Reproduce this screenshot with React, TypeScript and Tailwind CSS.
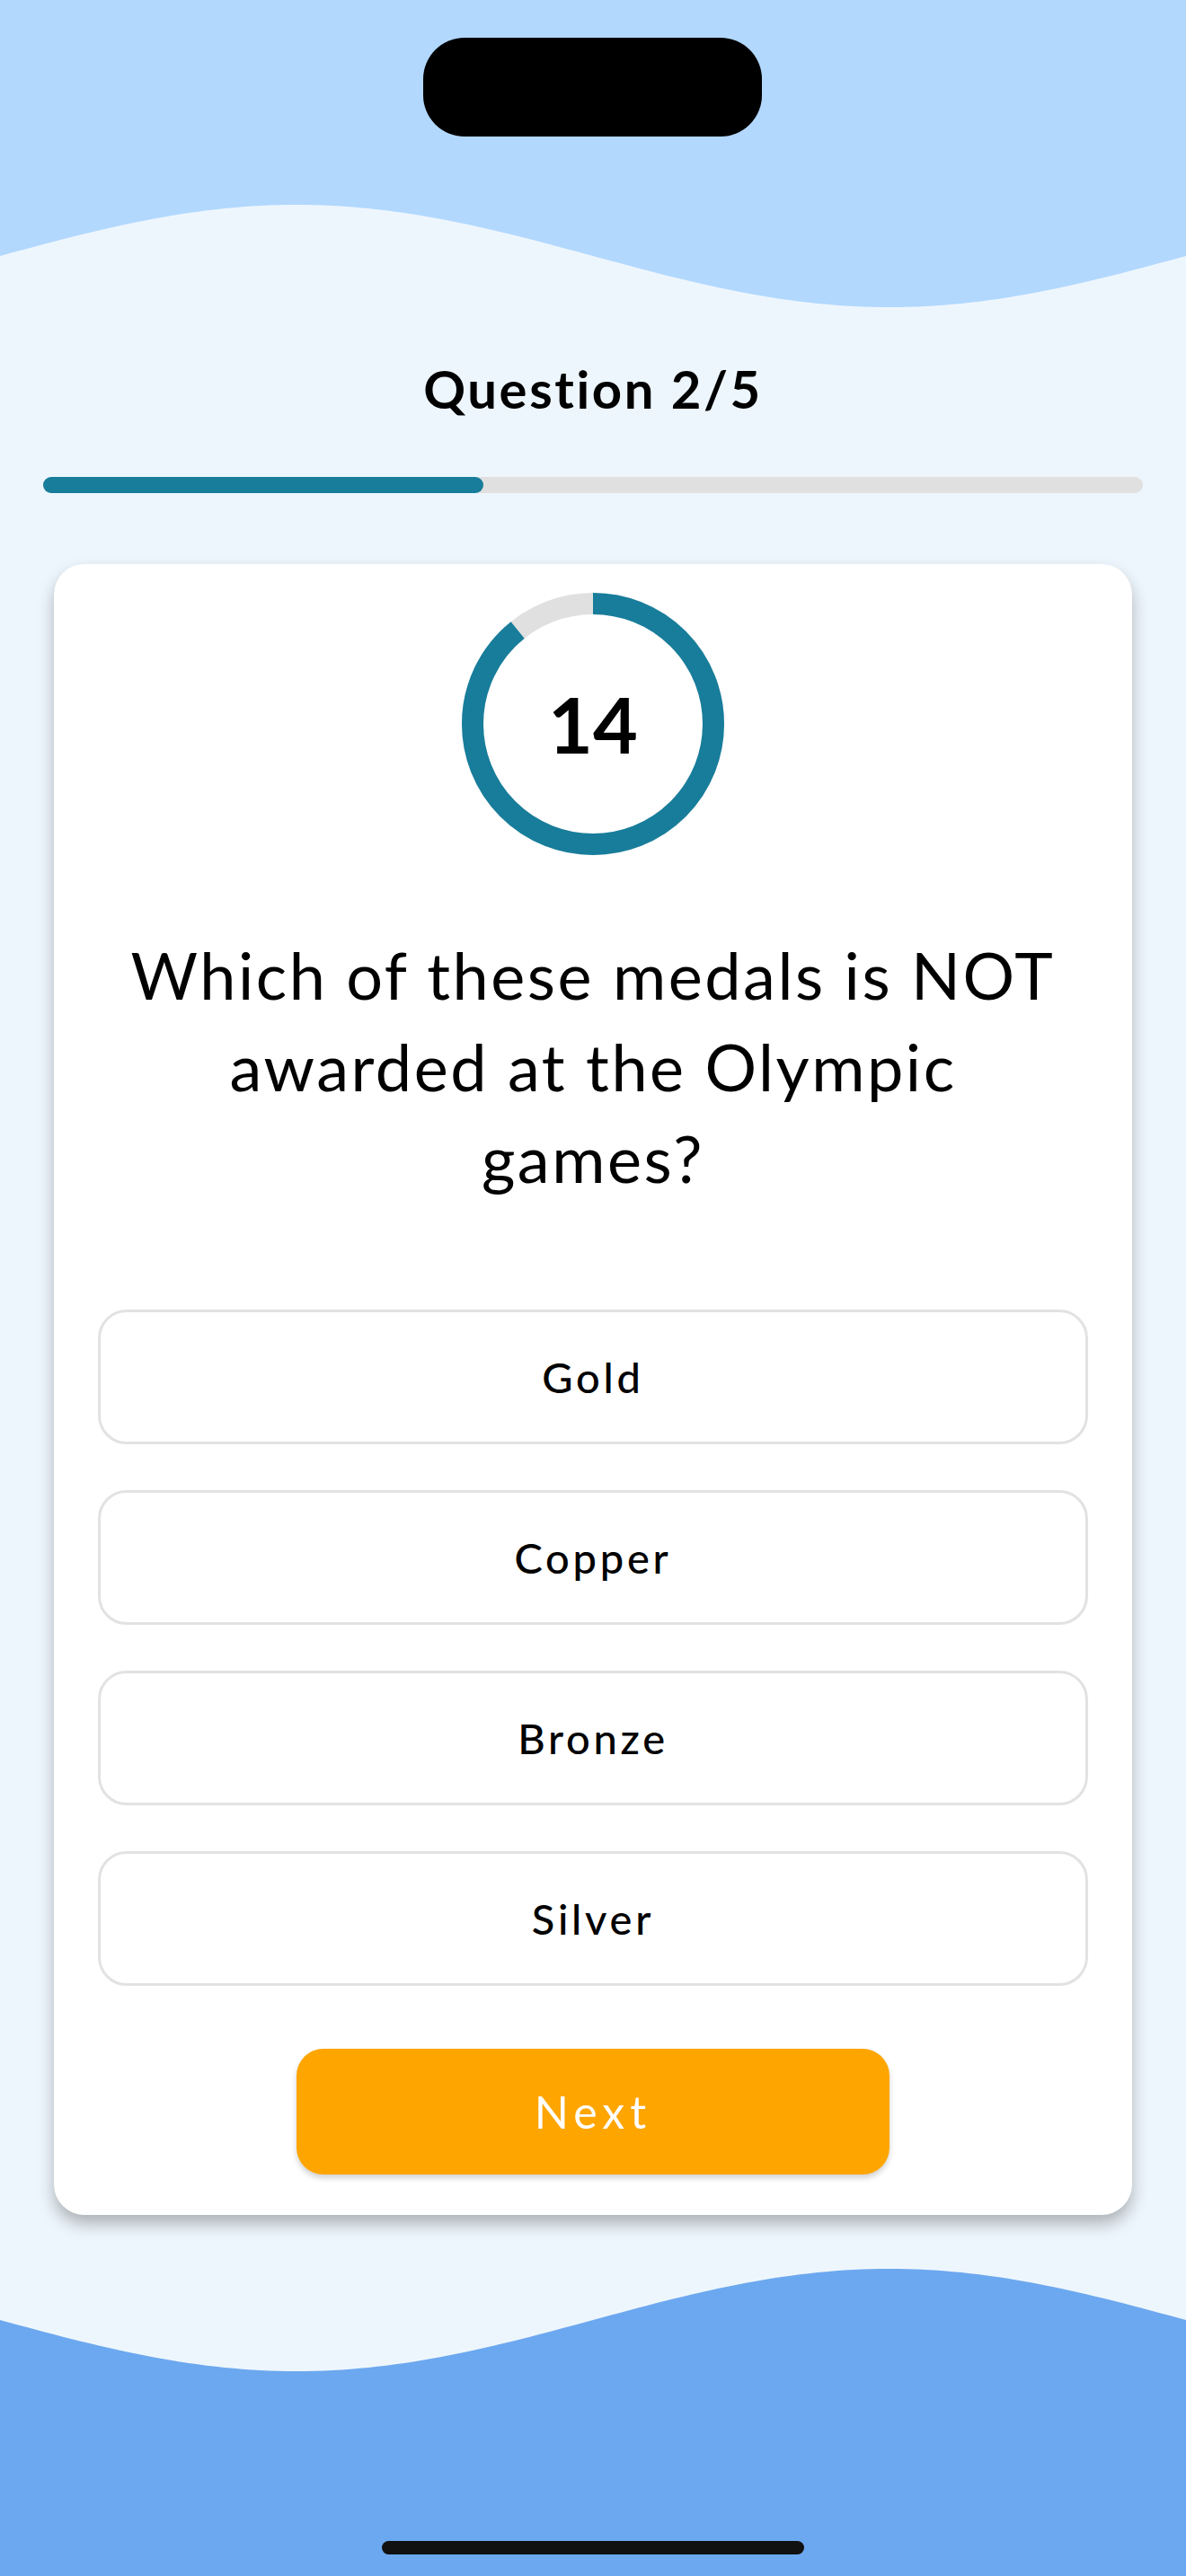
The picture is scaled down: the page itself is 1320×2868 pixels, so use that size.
import React from 'react';

const W = 1320;

// sine wave path, y = base + amp * sin(2πx / W) * dir, closed to top or bottom
const wavePath = (base: number, amp: number, dir: number, closeY: number) => {
  const pts: string[] = [];
  for (let x = 0; x <= W; x += 10) {
    const y = base + amp * dir * Math.sin((2 * Math.PI * x) / W);
    pts.push(`${x},${y.toFixed(2)}`);
  }
  return `M0,${closeY} L${pts.join(' L')} L${W},${closeY} Z`;
};

const options = ['Gold', 'Copper', 'Bronze', 'Silver'];

const Timer = ({ value, fraction }: { value: number; fraction: number }) => {
  const r = 134;
  const c = 2 * Math.PI * r;
  return (
    <div className="relative w-[292px] h-[292px]">
      <svg width="292" height="292" viewBox="0 0 292 292" className="absolute inset-0">
        <circle cx="146" cy="146" r={r} fill="none" stroke="#e0e0e0" strokeWidth="24" />
        <circle
          cx="146"
          cy="146"
          r={r}
          fill="none"
          stroke="#177d9b"
          strokeWidth="24"
          strokeDasharray={`${c * fraction} ${c}`}
          transform="rotate(-90 146 146)"
        />
      </svg>
      <div className="absolute inset-0 flex items-center justify-center">
        <span className="text-[86px] font-bold leading-none text-black">{value}</span>
      </div>
    </div>
  );
};

export default function App() {
  return (
    <div
      className="relative w-full h-[2868px] overflow-hidden bg-[#eef6fd]"
      style={{ fontFamily: 'Lato, "Noto Sans", sans-serif' }}
    >
      {/* Background waves */}
      <svg className="absolute top-0 left-0" width={W} height="360" viewBox={`0 0 ${W} 360`}>
        <path d={wavePath(285, 57, -1, 0)} fill="#b2d8fe" />
      </svg>
      <svg className="absolute left-0 top-[2450px]" width={W} height="418" viewBox={`0 0 ${W} 418`}>
        <path d={wavePath(133, 57, 1, 418)} fill="#6ca8ef" />
      </svg>

      {/* Dynamic island */}
      <div className="absolute top-[42px] left-[471px] w-[377px] h-[110px] rounded-[46px] bg-black" />

      {/* Content */}
      <div className="relative flex flex-col pt-[401px]">
        <h1 className="text-center text-[58px] font-bold leading-[64px] tracking-[0.045em] text-black">
          Question 2/5
        </h1>

        <div className="mx-[48px] mt-[66px] h-[18px] rounded-full bg-[#e0e0e0]">
          <div className="h-full w-[40%] rounded-full bg-[#177d9b]" />
        </div>

        <div className="mx-[60px] mt-[79px] flex flex-col items-center rounded-[34px] bg-white px-[49px] pt-[32px] pb-[45px] shadow-[0_10px_18px_rgba(0,0,0,0.28)]">
          <Timer value={14} fraction={0.892} />

          <p className="mt-[82px] text-center text-[72px] leading-[102px] tracking-[0.035em] text-black">
            Which of these medals is NOT
            <br />
            awarded at the Olympic
            <br />
            games?
          </p>

          <div className="mt-[118px] flex w-full flex-col gap-[51px]">
            {options.map((o) => (
              <button
                key={o}
                className="h-[150px] w-full rounded-[32px] border-[3px] border-[#e2e2e2] bg-white text-[47px] font-medium tracking-[0.08em] text-black"
              >
                {o}
              </button>
            ))}
          </div>

          <button className="mt-[70px] h-[140px] w-[660px] rounded-[30px] bg-[#fea500] text-[50px] tracking-[0.12em] text-white shadow-[0_4px_6px_rgba(0,0,0,0.18)]">
            Next
          </button>
        </div>
      </div>

      {/* Home indicator */}
      <div className="absolute top-[2829px] left-[425px] w-[470px] h-[15px] rounded-full bg-[#111111]" />
    </div>
  );
}
